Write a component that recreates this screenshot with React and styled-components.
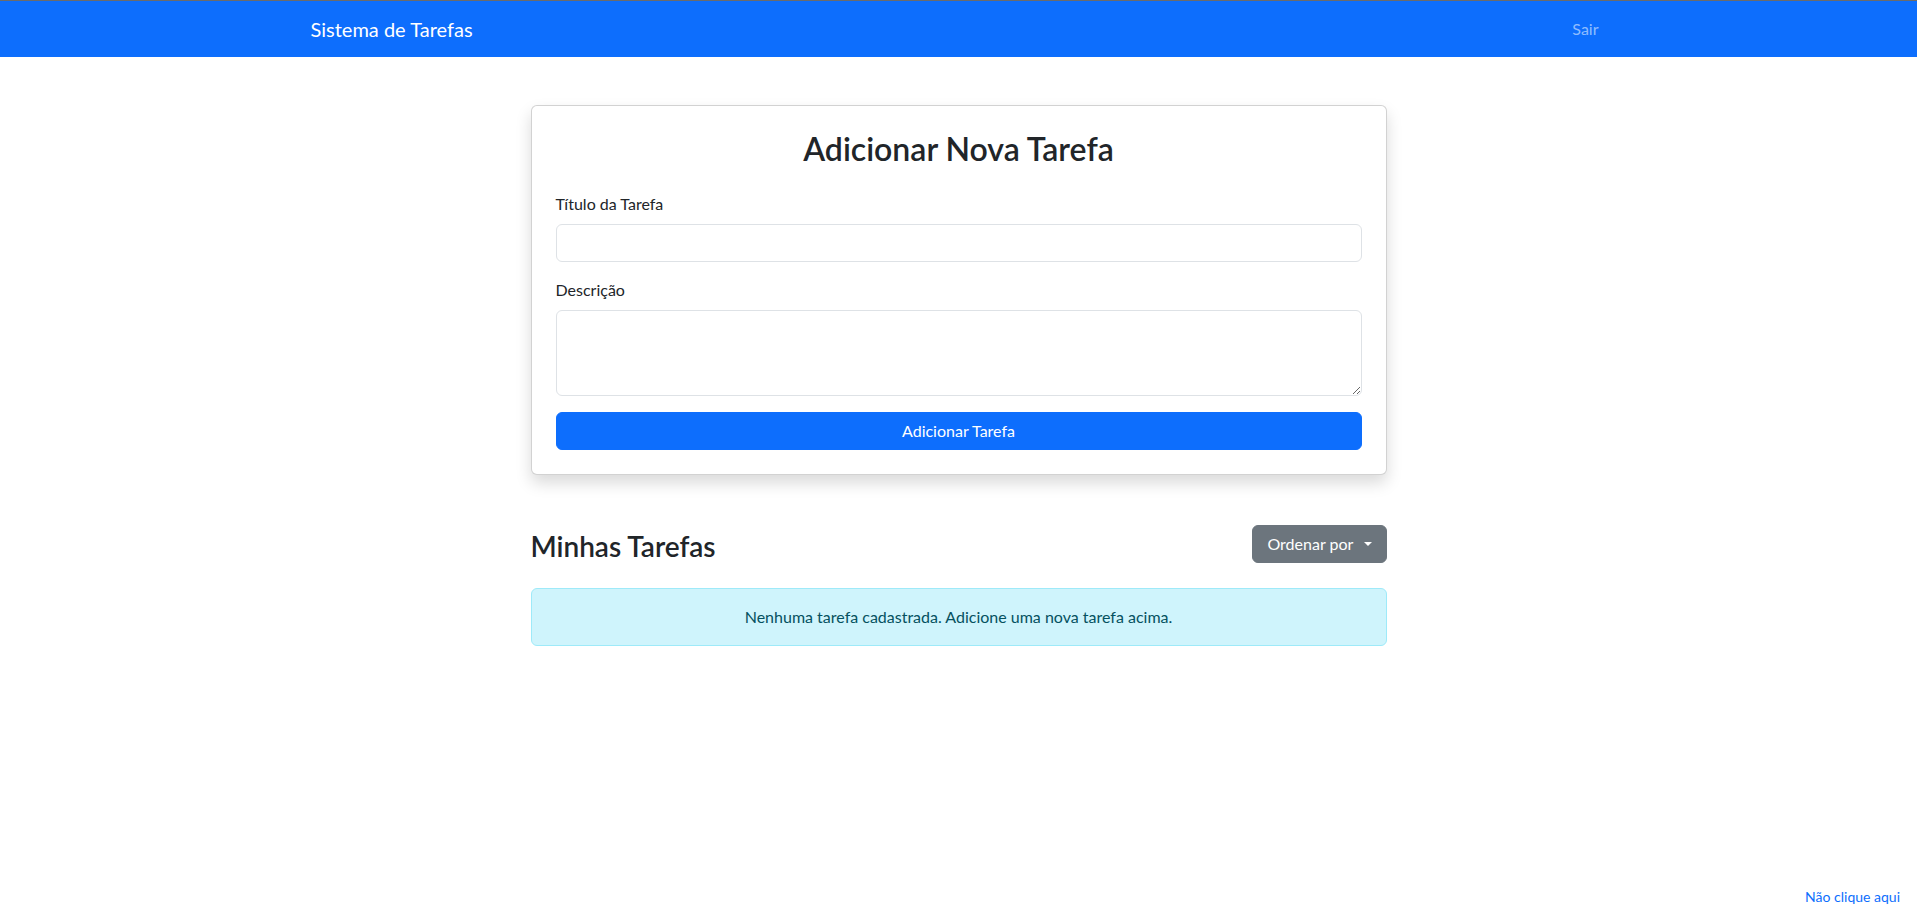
import React from "react";
import styled, { createGlobalStyle } from "styled-components";

const GlobalStyle = createGlobalStyle`
  *, *::before, *::after {
    box-sizing: border-box;
  }

  body {
    margin: 0;
    font-family: Lato, "Noto Sans", sans-serif;
    font-size: 16px;
    line-height: 1.5;
    color: #212529;
    background-color: #fff;
  }
`;

const Page = styled.div`
  min-height: 100vh;
  display: flex;
  flex-direction: column;
`;

const Navbar = styled.nav`
  background-color: #0d6efd;
  border-top: 1px solid #6b6b6b;
  padding: 8px 0;
`;

const NavInner = styled.div`
  width: 1320px;
  margin: 0 auto;
  padding: 0 12px;
  display: flex;
  align-items: center;
  justify-content: space-between;
`;

const Brand = styled.a`
  font-size: 20px;
  line-height: 30px;
  padding: 5px 0;
  color: #fff;
  text-decoration: none;
`;

const NavLink = styled.a`
  padding: 8px;
  line-height: 24px;
  color: rgba(255, 255, 255, 0.55);
  text-decoration: none;
`;

const Main = styled.main`
  width: 856px;
  margin: 48px auto 0;
`;

const Card = styled.section`
  border: 1px solid rgba(0, 0, 0, 0.175);
  border-radius: 6px;
  padding: 24px;
  box-shadow: 0 8px 16px rgba(0, 0, 0, 0.15);
  background: #fff;
`;

const CardTitle = styled.h2`
  margin: 0 0 24px;
  font-size: 32px;
  font-weight: 600;
  line-height: 1.2;
  text-align: center;
`;

const Field = styled.div`
  margin-bottom: 16px;
`;

const Label = styled.label`
  display: block;
  margin-bottom: 8px;
`;

const Input = styled.input`
  display: block;
  width: 100%;
  padding: 6px 12px;
  font: inherit;
  line-height: 1.5;
  color: #212529;
  border: 1px solid #dee2e6;
  border-radius: 6px;
  outline: none;
`;

const TextArea = styled(Input).attrs({ as: "textarea" })`
  resize: vertical;
  min-height: 86px;
`;

const Button = styled.button`
  display: ${(p) => (p.$block ? "block" : "inline-block")};
  width: ${(p) => (p.$block ? "100%" : "auto")};
  padding: 6px ${(p) => (p.$block ? "12px" : "14px")};
  font: inherit;
  line-height: 1.5;
  color: #fff;
  background-color: ${(p) => p.$bg};
  border: 1px solid ${(p) => p.$bg};
  border-radius: 6px;
  cursor: pointer;
`;

const Caret = styled.span`
  display: inline-block;
  margin-left: 0.4em;
  vertical-align: 0.255em;
  border-top: 0.3em solid;
  border-right: 0.3em solid transparent;
  border-left: 0.3em solid transparent;
`;

const ListHeader = styled.div`
  min-height: 40px;
  margin-top: 49px;
  margin-bottom: 24px;
  display: flex;
  align-items: center;
  justify-content: space-between;
`;

const SectionTitle = styled.h3`
  margin: 0;
  padding-top: 4px;
  font-size: 28px;
  font-weight: 600;
  line-height: 1.2;
`;

const Alert = styled.div`
  padding: 16px;
  border: 1px solid #9eeaf9;
  border-radius: 6px;
  background-color: #cff4fc;
  color: #055160;
  text-align: center;
`;

const Footer = styled.footer`
  margin-top: auto;
  padding: 0 17px 10px;
  text-align: right;
  font-size: 14px;
`;

const FooterLink = styled.a`
  color: #0d6efd;
  text-decoration: none;
`;

const App = () => {
  return (
    <Page>
      <GlobalStyle />
      <Navbar>
        <NavInner>
          <Brand href="#">Sistema de Tarefas</Brand>
          <NavLink href="#">Sair</NavLink>
        </NavInner>
      </Navbar>

      <Main>
        <Card>
          <CardTitle>Adicionar Nova Tarefa</CardTitle>
          <Field>
            <Label htmlFor="titulo">Título da Tarefa</Label>
            <Input id="titulo" type="text" />
          </Field>
          <Field>
            <Label htmlFor="descricao">Descrição</Label>
            <TextArea id="descricao" rows={3} />
          </Field>
          <Button $block $bg="#0d6efd">
            Adicionar Tarefa
          </Button>
        </Card>

        <ListHeader>
          <SectionTitle>Minhas Tarefas</SectionTitle>
          <Button $bg="#6c757d">
            Ordenar por <Caret />
          </Button>
        </ListHeader>

        <Alert>Nenhuma tarefa cadastrada. Adicione uma nova tarefa acima.</Alert>
      </Main>

      <Footer>
        <FooterLink href="#">Não clique aqui</FooterLink>
      </Footer>
    </Page>
  );
};

export default App;
